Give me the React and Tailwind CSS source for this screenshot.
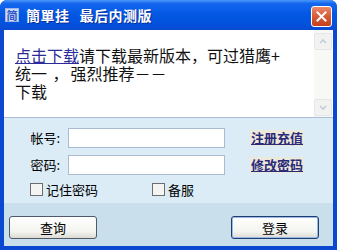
export default function App() {
  return (
    <div className="w-[337px] h-[250px] flex flex-col bg-[#0a48d2] rounded-t-[7px] overflow-hidden font-['Noto_Sans_CJK_SC',sans-serif] text-black">
      {/* title bar */}
      <div className="h-[30px] flex items-center pl-[5px] pr-[5px] bg-[linear-gradient(to_bottom,#4a97f8_0%,#1466ee_12%,#0358e4_45%,#0252dd_80%,#0a4ad2_100%)]">
        <div className="w-[14px] h-[14px] flex items-center justify-center bg-[#cdd9f6] border border-[#9db6ec] text-[11px] leading-none font-bold text-[#2a54c8]">
          简
        </div>
        <div className="ml-[7px] text-[14px] font-bold text-white leading-none tracking-[0.5px] [text-shadow:1px_1px_0_#0a2e9a]">
          簡單挂<span className="ml-[10px]">最后内测版</span>
        </div>
        <div className="ml-auto mt-[2px] w-[21px] h-[21px] rounded-[3px] border border-white flex items-center justify-center bg-[linear-gradient(to_bottom,#e98a6c,#d85a36_50%,#c2401f)]">
          <svg width="11" height="11" viewBox="0 0 11 11">
            <path d="M1.5 1.5 L9.5 9.5 M9.5 1.5 L1.5 9.5" stroke="white" strokeWidth="2" strokeLinecap="square" />
          </svg>
        </div>
      </div>

      {/* body */}
      <div className="flex-1 flex flex-col px-[4px] pb-[4px]">
        {/* message box */}
        <div className="h-[88px] flex bg-white border-b border-[#a8bdd6]">
          <div className="flex-1 pl-[11px] pt-[16px] text-[16px] leading-[18px] text-[#111]">
            <div>
              <span className="text-[#2a2a9a] underline">点击下载</span>请下载最新版本，可过猎鹰+
            </div>
            <div>
              统一 <span className="ml-[2px]">，</span>
              <span className="ml-[2px]">强烈推荐－－</span>
            </div>
            <div>下载</div>
          </div>
          <div className="w-[18px] mr-[1px] flex flex-col bg-[#f8f8f5]">
            <div className="mt-[3px] h-[17px] rounded-[2px] border border-[#e4e6ea] bg-[#f2f3f1] flex items-center justify-center">
              <svg width="8" height="5" viewBox="0 0 8 5">
                <path d="M1 4 L4 1 L7 4" stroke="#c3cad8" strokeWidth="1.6" fill="none" />
              </svg>
            </div>
            <div className="flex-1" />
            <div className="mb-[1px] h-[17px] rounded-[2px] border border-[#e4e6ea] bg-[#f2f3f1] flex items-center justify-center">
              <svg width="8" height="5" viewBox="0 0 8 5">
                <path d="M1 1 L4 4 L7 1" stroke="#c3cad8" strokeWidth="1.6" fill="none" />
              </svg>
            </div>
          </div>
        </div>

        {/* form */}
        <div className="h-[85px] bg-[#dbecf7] pt-[10px] text-[13px]">
          <div className="flex items-center h-[20px]">
            <div className="w-[56px] text-right">帐号:</div>
            <div className="ml-[8px] w-[157px] h-[20px] bg-white border border-[#a9bbd0]" />
            <div className="ml-[25px] px-[1px] bg-[#ece8da] font-bold text-[#2a2a7a] underline leading-[16px]">注册充值</div>
          </div>
          <div className="flex items-center h-[20px] mt-[7px]">
            <div className="w-[56px] text-right">密码:</div>
            <div className="ml-[8px] w-[157px] h-[20px] bg-white border border-[#a9bbd0]" />
            <div className="ml-[25px] px-[1px] bg-[#ece8da] font-bold text-[#2a2a7a] underline leading-[16px]">修改密码</div>
          </div>
          <div className="flex items-center mt-[7px] pl-[26px] h-[15px]">
            <div className="w-[122px] flex items-center">
              <div className="w-[13px] h-[13px] border border-[#6e6e6e] bg-[#f4f4f2]" />
              <span className="ml-[3px]">记住密码</span>
            </div>
            <div className="flex items-center">
              <div className="w-[13px] h-[13px] border border-[#6e6e6e] bg-[#f4f4f2]" />
              <span className="ml-[3px]">备服</span>
            </div>
          </div>
        </div>

        {/* buttons */}
        <div className="flex-1 bg-[#c9e0ec] flex justify-between pl-[5px] pr-[14px] pt-[13px] text-[13px]">
          <button className="w-[88px] h-[23px] rounded-[3px] border border-[#4c5a6a] bg-[linear-gradient(to_bottom,#ffffff,#f3f3ef_70%,#dcdad2)] flex items-center justify-center">
            查询
          </button>
          <button className="w-[88px] h-[23px] rounded-[3px] border border-[#1f3d6e] shadow-[inset_0_0_0_1px_#9bb8ea] bg-[linear-gradient(to_bottom,#ffffff,#f3f3ef_70%,#dcdad2)] flex items-center justify-center">
            登录
          </button>
        </div>
      </div>
    </div>
  );
}
